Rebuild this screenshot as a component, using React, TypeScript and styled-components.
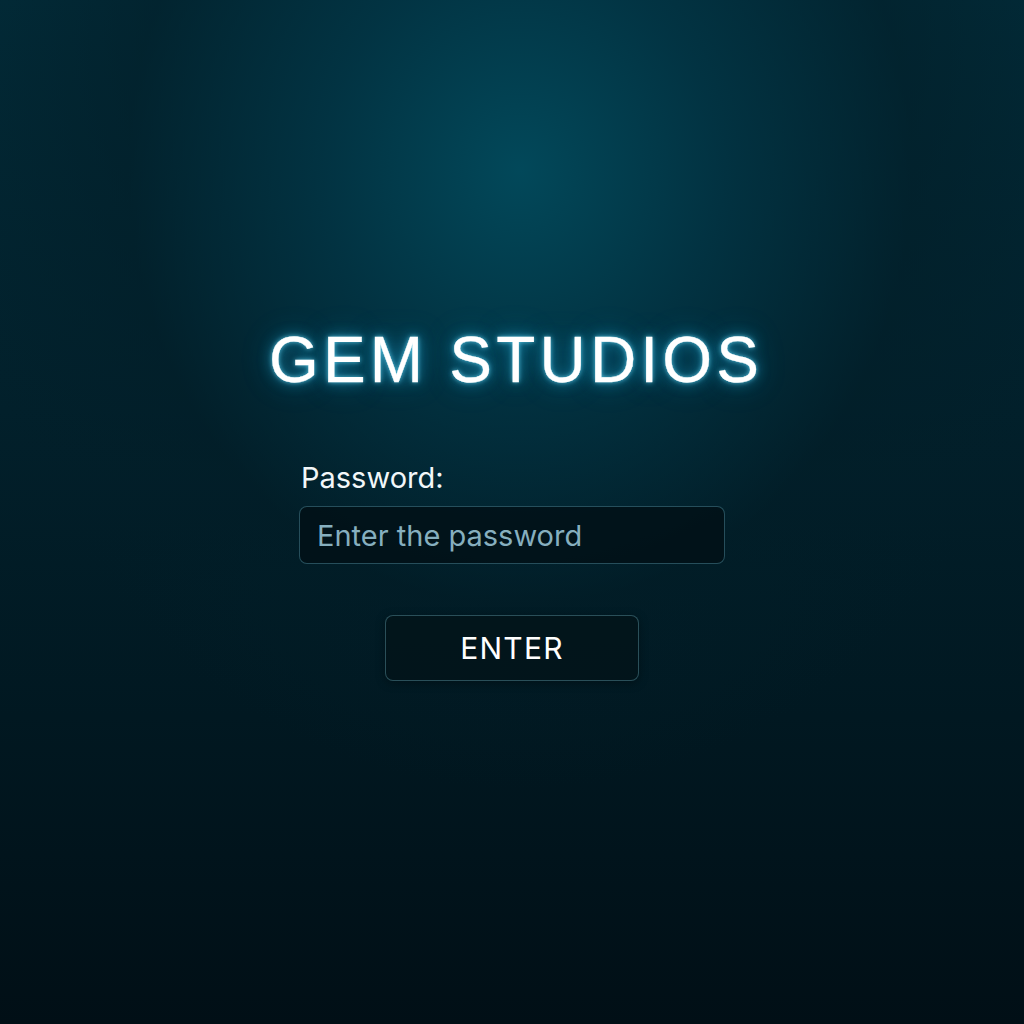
import styled, { createGlobalStyle } from 'styled-components';

const GlobalStyle = createGlobalStyle`
  html, body {
    margin: 0;
    padding: 0;
    height: 100%;
  }
  body {
    background: #010e15;
    font-family: Inter, "Noto Sans", sans-serif;
  }
  #root {
    height: 100%;
  }
`;

function App() {
  return (
    <>
      <GlobalStyle />
      <Page>
        <Title>GEM STUDIOS</Title>
        <Form onSubmit={(e) => e.preventDefault()}>
          <Label htmlFor="password">Password:</Label>
          <Input id="password" type="password" placeholder="Enter the password" />
          <EnterButton type="submit">ENTER</EnterButton>
        </Form>
      </Page>
    </>
  );
}

const Page = styled.main`
  box-sizing: border-box;
  width: 100%;
  height: 1024px;
  display: flex;
  flex-direction: column;
  align-items: center;
  padding-top: 324px;
  background:
    radial-gradient(ellipse 560px 620px at 520px 170px, rgba(2, 74, 92, 0.95) 0%, rgba(2, 54, 70, 0.8) 35%, rgba(2, 30, 40, 0.5) 70%, rgba(2, 20, 28, 0) 100%),
    linear-gradient(180deg, #022a37 0%, #02202b 40%, #011821 70%, #010f16 100%);
  color: #f4fbfd;
`;

const Title = styled.h1`
  margin: 0 0 0 4px;
  font-family: "Liberation Sans", Arial, sans-serif;
  font-weight: 400;
  font-size: 64px;
  line-height: 72px;
  letter-spacing: 4.2px;
  margin-right: -4.2px;
  color: #ffffff;
  -webkit-text-stroke: 0.3px #ffffff;
  text-shadow:
    0 0 5px rgba(110, 225, 255, 0.8),
    0 0 14px rgba(40, 190, 240, 0.6),
    0 0 30px rgba(20, 160, 220, 0.45);
`;

const Form = styled.form`
  display: flex;
  flex-direction: column;
  align-items: center;
  margin-top: 65px;
  width: 426px;
`;

const Label = styled.label`
  align-self: flex-start;
  margin-left: 2px;
  font-size: 29px;
  line-height: 34px;
  color: #f2f7f9;
  margin-bottom: 11px;
`;

const Input = styled.input`
  box-sizing: border-box;
  width: 426px;
  height: 58px;
  padding: 0 17px;
  border-radius: 8px;
  border: 1px solid rgba(70, 130, 145, 0.55);
  background: rgba(1, 16, 22, 0.82);
  color: #cfe6ee;
  font-family: Inter, "Noto Sans", sans-serif;
  font-size: 29px;
  outline: none;

  &::placeholder {
    color: #86afbf;
  }
`;

const EnterButton = styled.button`
  box-sizing: border-box;
  margin-top: 51px;
  width: 254px;
  height: 66px;
  border-radius: 8px;
  border: 1px solid rgba(70, 120, 132, 0.6);
  background: rgba(2, 20, 26, 0.85);
  color: #ffffff;
  font-family: Inter, "Noto Sans", sans-serif;
  font-size: 30px;
  letter-spacing: 1.2px;
  cursor: pointer;
  box-shadow: 0 2px 10px rgba(0, 0, 0, 0.35);
`;

export default App;
